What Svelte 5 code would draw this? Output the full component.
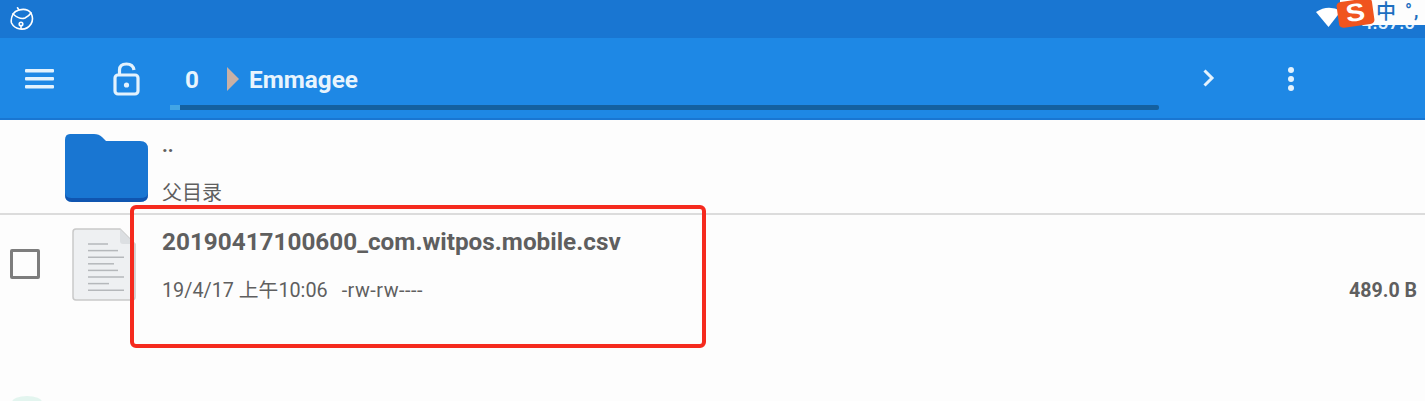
<script>
	const lines = [
		[88, 108],
		[88, 118],
		[88, 124],
		[88, 114],
		[88, 118],
		[88, 124],
		[88, 109],
		[88, 124]
	];
</script>

<div class="screen">
	<div class="status">
		<svg class="bell" width="24" height="24" viewBox="0 0 24 24" fill="none" stroke="#fff" stroke-width="1.600" stroke-linejoin="round" stroke-linecap="round">
			<path d="M9 3 Q17 1 21 6 Q24 12 21 17 Q17 23 10 22 Q4 21 1.500 16 Q0.500 12 3 7 Q5 4 9 3 Z" />
			<path d="M3 7 Q10 13 15 11 Q19 9 21 6" />
			<path d="M9 3 L7.500 0.800" />
			<circle cx="11" cy="17" r="1.800" />
			<path d="M11 18.500 V21.500" />
		</svg>
		<div class="tray">
			<svg class="wifi" width="26" height="20" viewBox="0 0 26 20"><path d="M0 5 Q12 -3 25 4 L12.500 20 Z" fill="#fff" /></svg>
			<span class="clock">4:57:0</span>
			<div class="ime">
				<span class="sogou"><span>S</span></span>
				<span class="zh">中</span>
				<span class="punct">°,</span>
			</div>
		</div>
	</div>

	<header class="toolbar">
		<svg class="menu" width="30" height="20" viewBox="0 0 30 20" fill="#e3f2fd">
			<rect x="0" y="0" width="29" height="3.500" rx="1" />
			<rect x="0" y="8" width="29" height="3.500" rx="1" />
			<rect x="0" y="16" width="29" height="3.500" rx="1" />
		</svg>
		<svg class="lock" width="28" height="34" viewBox="0 0 28 34" fill="none" stroke="#e3f2fd" stroke-width="3.200">
			<rect x="2" y="13" width="23" height="19" rx="3" />
			<path d="M6.500 13 V8 Q6.500 2 13.500 2 Q20 2 21 8" />
			<circle cx="13.500" cy="23" r="2.600" fill="#e3f2fd" stroke="none" />
		</svg>
		<div class="crumbs">
			<div class="path">
				<span class="root">0</span>
				<span class="sep"></span>
				<span class="dir">Emmagee</span>
			</div>
			<div class="scroll"><span class="thumb"></span></div>
		</div>
		<svg class="next" width="14" height="20" viewBox="0 0 14 20" fill="none" stroke="#e3f2fd" stroke-width="3">
			<path d="M2.500 2.500 L10 10 L2.500 17.500" />
		</svg>
		<div class="more"><span></span><span></span><span></span></div>
	</header>

	<main class="list">
		<div class="row parent">
			<svg class="folder" width="86" height="70" viewBox="0 0 86 70">
				<path d="M6 1 H30 Q35 1 38 4 L42 8 H76 Q84 8 84 16 V62 Q84 69 76 69 H8 Q1 69 1 62 V7 Q1 1 6 1 Z" fill="#1976d2" />
				<path d="M1 60 V62 Q1 69 8 69 H76 Q84 69 84 62 V60 Q84 65 76 65 H8 Q1 65 1 60 Z" fill="#0d47a1" opacity="0.7" />
			</svg>
			<div class="text">
				<div class="dots">..</div>
				<div class="sub">父目录</div>
			</div>
		</div>
		<div class="row file">
			<span class="check"></span>
			<svg class="doc" width="66" height="74" viewBox="72 226 66 74">
				<path d="M76 228 H120 L135 243 V296 Q135 299 132 299 H76 Q73 299 73 296 V231 Q73 228 76 228 Z" fill="#eef0f2" stroke="#c9c9c9" stroke-width="1.500" />
				<path d="M120 228 V240 Q120 243 123 243 H135 Z" fill="#dcdfe2" />
				{#each lines as [x1, x2], i}
					<line {x1} {x2} y1={243 + i * 6.6} y2={243 + i * 6.6} stroke="#b5b8bb" stroke-width="1.500" />
				{/each}
			</svg>
			<div class="text">
				<div class="name">20190417100600_com.witpos.mobile.csv</div>
				<div class="meta"><span>19/4/17 上午10:06</span><span class="perms">-rw-rw----</span></div>
			</div>
			<div class="size">489.0 B</div>
		</div>
		<div class="annotation"></div>
		<div class="fab-hint"></div>
	</main>
</div>

<style>
	:global(body) {
		margin: 0;
		background: #fdfdfd;
	}

	.screen {
		width: 1425px;
		height: 401px;
		overflow: hidden;
		font-family: Roboto, 'Noto Sans CJK SC', sans-serif;
		display: flex;
		flex-direction: column;
	}

	.status {
		height: 38px;
		background: #1976d2;
		display: flex;
		justify-content: space-between;
		flex-shrink: 0;
	}

	.bell {
		margin: 7px 0 0 10px;
	}

	.tray {
		position: relative;
		display: flex;
		align-items: flex-start;
	}

	.wifi {
		margin: 7px -2px 0 0;
	}

	.clock {
		position: absolute;
		right: 10px;
		top: 12px;
		font-size: 19px;
		line-height: 22px;
		font-weight: 500;
		color: #e3f2fd;
	}

	.ime {
		position: relative;
		display: flex;
		align-items: flex-start;
		background: #fdfdfd;
		height: 25px;
		width: 85px;
	}

	.sogou {
		width: 31px;
		height: 26px;
		background: #f0541e;
		border-radius: 4px;
		color: #fff;
		font-family: 'Liberation Sans', sans-serif;
		font-weight: bold;
		font-size: 25px;
		line-height: 25px;
		text-align: center;
		margin-right: 5px;
		transform: rotate(-8deg) scaleX(1.150);
	}

	.zh {
		font-size: 20px;
		line-height: 24px;
		color: #1e6fc0;
		font-weight: 500;
	}

	.punct {
		font-size: 18px;
		font-weight: bold;
		line-height: 22px;
		color: #1e6fc0;
		margin-left: 9px;
		letter-spacing: 2px;
		white-space: nowrap;
	}

	.toolbar {
		height: 82px;
		background: #1e88e5;
		border-bottom: 2px solid #1976d2;
		box-sizing: border-box;
		display: flex;
		align-items: flex-start;
		flex-shrink: 0;
		color: #e8f4fd;
	}

	.menu {
		margin: 31px 0 0 25px;
	}

	.lock {
		margin: 24px 0 0 58px;
	}

	.crumbs {
		width: 989px;
		margin-left: 29px;
		padding-top: 24px;
		flex-shrink: 0;
	}

	.path {
		display: flex;
		align-items: center;
		height: 34px;
		font-size: 24.300px;
		font-weight: 700;
		padding-left: 15px;
	}

	.root {
		width: 42px;
	}

	.sep {
		width: 0;
		height: 0;
		border-left: 12px solid #c9b0a5;
		border-top: 12px solid transparent;
		border-bottom: 12px solid transparent;
		margin-right: 10px;
	}

	.scroll {
		height: 5px;
		margin-top: 9px;
		background: #14609f;
		border-radius: 2px;
	}

	.thumb {
		display: block;
		width: 10px;
		height: 5px;
		background: #42a5e5;
	}

	.next {
		margin: 30px 0 0 43px;
	}

	.more {
		display: flex;
		flex-direction: column;
		gap: 3px;
		margin: 29px 0 0 72px;
	}

	.more span {
		width: 6px;
		height: 6px;
		border-radius: 50%;
		background: #e3f2fd;
	}

	.list {
		position: relative;
		flex: 1;
		background: #fdfdfd;
		color: #5f5f5f;
	}

	.row {
		display: flex;
		box-sizing: border-box;
	}

	.parent {
		height: 95px;
		border-bottom: 2px solid #dcdcdc;
		padding: 13px 0 0 64px;
	}

	.folder {
		flex-shrink: 0;
	}

	.parent .text {
		margin-left: 12px;
	}

	.dots {
		font-size: 20px;
		font-weight: 700;
		line-height: 24px;
		height: 47px;
	}

	.sub {
		font-size: 20px;
		line-height: 26px;
	}

	.file {
		padding-top: 12px;
		align-items: flex-start;
	}

	.check {
		width: 24px;
		height: 24px;
		border: 3px solid #7d7d7d;
		border-radius: 2px;
		margin: 22px 0 0 10px;
		flex-shrink: 0;
	}

	.doc {
		margin: 0 0 0 32px;
		flex-shrink: 0;
	}

	.file .text {
		margin-left: 24px;
		flex: 1;
	}

	.name {
		font-size: 24.300px;
		font-weight: 700;
		line-height: 30px;
	}

	.meta {
		display: flex;
		gap: 14px;
		font-size: 19.800px;
		line-height: 26px;
		margin-top: 21px;
	}

	.perms {
		letter-spacing: 0.500px;
	}

	.size {
		font-size: 19.600px;
		font-weight: 700;
		line-height: 24px;
		margin: 52px 8px 0 0;
	}

	.annotation {
		position: absolute;
		left: 130px;
		top: 85px;
		width: 568px;
		height: 135px;
		border: 4px solid #f52a1e;
		border-radius: 6px;
	}

	.fab-hint {
		position: absolute;
		left: 12px;
		bottom: -7px;
		width: 30px;
		height: 12px;
		border-radius: 50%;
		background: #e3f5ef;
	}
</style>
